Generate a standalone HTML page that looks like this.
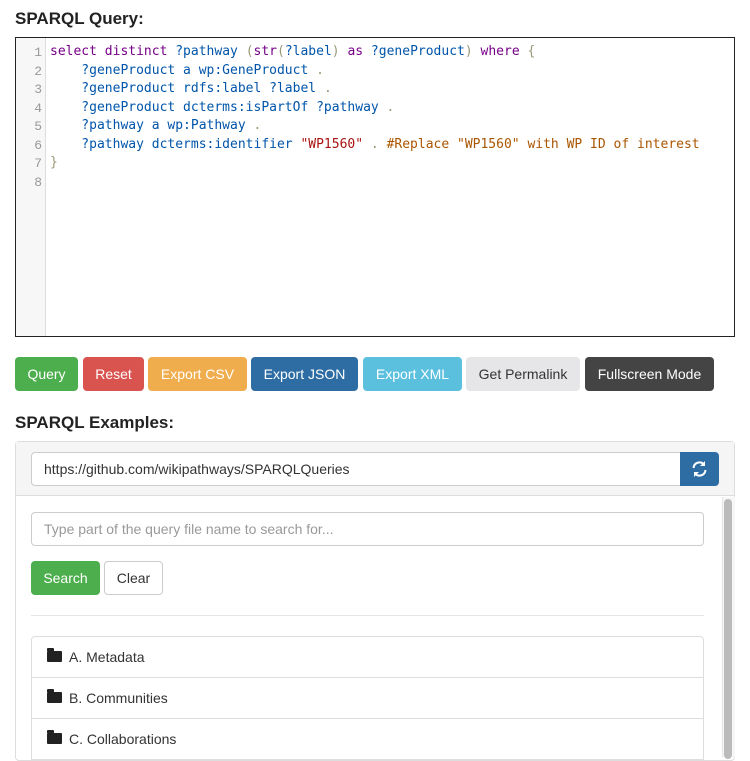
<!DOCTYPE html>
<html><head><style>
*{box-sizing:border-box}
body{margin:0;width:750px;height:750px;overflow:hidden;background:#fff;font-family:"Liberation Sans",sans-serif;color:#333;position:relative}
.abs{position:absolute}
h3{position:absolute;margin:0;font-size:17px;font-weight:bold;color:#222}
.ed{left:15px;top:37px;width:720px;height:300px;border:1px solid #222;background:#fff}
.gut{position:absolute;left:0;top:0;width:30px;height:100%;background:#f7f7f7;border-right:1px solid #ddd}
.ln{position:absolute;left:0;width:26px;text-align:right;color:#999;font:13px "Liberation Mono",monospace}
.cl{position:absolute;left:34px;white-space:pre;font:13px "DejaVu Sans Mono","Liberation Mono",monospace;color:#05a}
.k{color:#708}.s{color:#a11}.c{color:#a50}.p{color:#997}
.btn{position:absolute;top:357px;height:34px;border-radius:4px;color:#fff;font-size:14px;line-height:34px;text-align:center}
.inp{position:absolute;border:1px solid #ccc;border-radius:4px;background:#fff;font-size:14px;line-height:32px;padding-left:12px}
.li{position:absolute;left:31px;width:673px;height:42px;border:1px solid #ddd;background:#fff;font-size:14px;line-height:40px;padding-left:37px}
.fold{position:absolute;left:15px;top:14px;width:15px;height:11px;background:#222;border-radius:1px}
.fold:before{content:"";position:absolute;left:0;top:-3px;width:7px;height:3px;background:#222;border-radius:1px 1px 0 0}
</style></head><body>
<h3 style="left:15px;top:9px">SPARQL Query:</h3>
<div class="abs ed">
<div class="gut"></div>
<div class="ln" style="top:7px">1</div><div class="ln" style="top:26px">2</div><div class="ln" style="top:44px">3</div><div class="ln" style="top:63px">4</div><div class="ln" style="top:81px">5</div><div class="ln" style="top:100px">6</div><div class="ln" style="top:118px">7</div><div class="ln" style="top:137px">8</div>
<div class="cl" style="top:6px"><span class="k">select distinct</span> ?pathway <span class="p">(</span><span class="k">str</span><span class="p">(</span>?label<span class="p">)</span> <span class="k">as</span> ?geneProduct<span class="p">)</span> <span class="k">where</span> <span class="p">{</span></div>
<div class="cl" style="top:25px">    ?geneProduct a wp:GeneProduct <span class="p">.</span></div>
<div class="cl" style="top:43px">    ?geneProduct rdfs:label ?label <span class="p">.</span></div>
<div class="cl" style="top:62px">    ?geneProduct dcterms:isPartOf ?pathway <span class="p">.</span></div>
<div class="cl" style="top:80px">    ?pathway a wp:Pathway <span class="p">.</span></div>
<div class="cl" style="top:99px">    ?pathway dcterms:identifier <span class="s">"WP1560"</span> <span class="p">.</span> <span class="c">#Replace "WP1560" with WP ID of interest</span></div>
<div class="cl" style="top:117px"><span class="p">}</span></div>
</div>
<div class="btn" style="left:15px;width:63px;background:#4cae4c">Query</div>
<div class="btn" style="left:83px;width:61px;background:#d9534f">Reset</div>
<div class="btn" style="left:148px;width:99px;background:#f0ad4e">Export CSV</div>
<div class="btn" style="left:251px;width:107px;background:#2e6da4">Export JSON</div>
<div class="btn" style="left:363px;width:99px;background:#5bc0de">Export XML</div>
<div class="btn" style="left:466px;width:114px;background:#e6e6e9;color:#333">Get Permalink</div>
<div class="btn" style="left:585px;width:129px;background:#444">Fullscreen Mode</div>
<h3 style="left:15px;top:413px">SPARQL Examples:</h3>
<div class="abs" style="left:15px;top:441px;width:720px;height:320px;border:1px solid #ddd;border-radius:4px;background:#fff"></div>
<div class="abs" style="left:16px;top:442px;width:718px;height:54px;background:#f5f5f5;border-bottom:1px solid #ddd"></div>
<div class="inp" style="left:31px;top:452px;width:652px;height:34px;color:#333;border-radius:4px 0 0 4px">https://github.com/wikipathways/SPARQLQueries</div>
<div class="abs" style="left:680px;top:452px;width:39px;height:34px;background:#2e6da4;border-radius:0 4px 4px 0">
<svg width="39" height="34" viewBox="0 0 39 34"><g fill="none" stroke="#fff" stroke-width="2"><path d="M13.5 16a6 6 0 0 1 10.5-3.5"/><path d="M25.5 18a6 6 0 0 1-10.5 3.5"/></g><path d="M25 9v5h-5z M14 25v-5h5z" fill="#fff"/></svg></div>
<div class="abs" style="left:722px;top:497px;width:13px;height:260px;background:#f7f7f7;border-left:1px solid #e5e5e5"></div>
<div class="abs" style="left:724px;top:499px;width:8px;height:260px;background:#bbb;border-radius:4px"></div>
<div class="inp" style="left:31px;top:512px;width:673px;height:34px;color:#999">Type part of the query file name to search for...</div>
<div class="btn" style="left:31px;top:561px;width:69px;background:#4cae4c">Search</div>
<div class="btn" style="left:104px;top:561px;width:59px;background:#fff;color:#333;border:1px solid #ccc;line-height:32px">Clear</div>
<div class="abs" style="left:31px;top:615px;width:673px;height:1px;background:#e5e5e5"></div>
<div class="li" style="top:636px;border-radius:4px 4px 0 0"><span class="fold"></span>A. Metadata</div>
<div class="li" style="top:677px"><span class="fold"></span>B. Communities</div>
<div class="li" style="top:718px"><span class="fold"></span>C. Collaborations</div>
</body></html>
